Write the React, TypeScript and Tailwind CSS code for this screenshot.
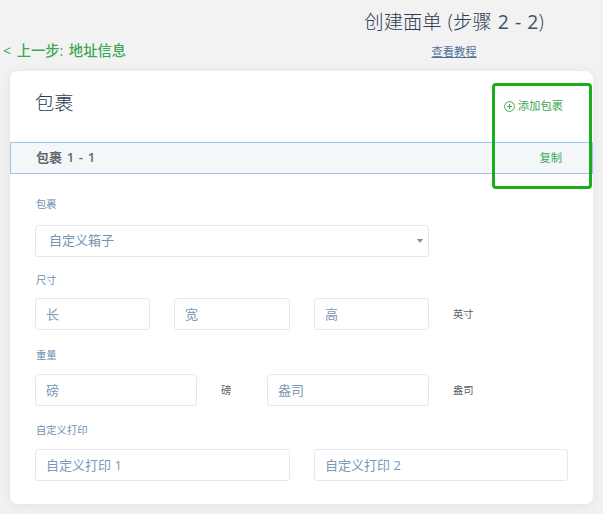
type FieldProps = {
  placeholder: string;
  className: string;
};

function Field({ placeholder, className }: FieldProps) {
  return (
    <input
      type="text"
      placeholder={placeholder}
      className={`h-8 rounded-[3px] border border-[#e6e8ef] bg-white pl-[10px] pb-px text-[13px] text-[#6f8fb3] placeholder:text-[#7c98b8] outline-none ${className}`}
    />
  );
}

function Label({ children }: { children: string }) {
  return <div className="pl-px text-[10.3px] leading-4 text-[#7090b4]">{children}</div>;
}

function Unit({ children }: { children: string }) {
  return <span className="text-[10.3px] leading-4 text-[#5c5f63]">{children}</span>;
}

function PlusCircle() {
  return (
    <svg width="11" height="11" viewBox="0 0 11 11" fill="none" stroke="currentColor">
      <circle cx="5.5" cy="5.5" r="4.9" />
      <path d="M5.5 3v5M3 5.5h5" />
    </svg>
  );
}

function Header() {
  return (
    <header className="flex h-[71px] justify-between pl-[3px] pr-[10px]">
      <a href="#" className="pt-[41px] text-[14.3px] font-medium leading-5 text-[#3ba755] [word-spacing:1.8px]">
        &lt; 上一步: 地址信息
      </a>
      <div className="flex w-[278px] flex-col items-center pt-[9px]">
        <h1 className="text-[19.3px] font-light leading-[26px] text-[#2b3d55] [word-spacing:1.2px]">
          创建面单 (步骤 <span className="font-normal text-[#40526a]">2 - 2</span>)
        </h1>
        <a href="#" className="mt-[9px] text-[11.3px] leading-4 text-[#50709a] underline">
          查看教程
        </a>
      </div>
    </header>
  );
}

export default function App() {
  return (
    <div className="h-[514px] w-[603px] overflow-hidden bg-[#f2f2f2] font-['Open_Sans','Noto_Sans_CJK_SC',sans-serif]">
      <Header />
      <main className="relative ml-[10px] h-[433px] w-[583px] rounded-lg bg-white shadow-[0_2px_12px_rgba(80,80,120,0.09)]">
        <div className="flex h-[71px] justify-between pl-[25px] pr-[30px]">
          <h2 className="pt-[18px] text-[19.3px] font-light leading-7 text-[#2b3d55]">包裹</h2>
          <button className="flex h-4 items-center gap-[3px] mt-[27px] text-[11.3px] text-[#3ba755]">
            <PlusCircle />
            添加包裹
          </button>
        </div>
        <div className="flex h-8 items-center justify-between border border-[#a5c1ed] bg-[#f3f7fa] pl-[25px] pr-[30px]">
          <span className="text-[13px] font-semibold text-[#66696d] [word-spacing:1.3px]">包裹 1 - 1</span>
          <button className="text-[11.3px] text-[#3ba755]">复制</button>
        </div>

        <form className="pl-[25px] pr-[25px] pt-[22px]">
          <Label>包裹</Label>
          <div className="mt-[13px] flex h-8 w-[394px] items-center justify-between rounded-[3px] border border-[#e6e8ef] pl-[13px] pr-[5px] text-[13px] text-[#7592b4]">
            自定义箱子
            <svg width="6" height="4" viewBox="0 0 6 4" fill="currentColor">
              <path d="M0 0h6L3 4z" />
            </svg>
          </div>

          <div className="mt-[15px]">
            <Label>尺寸</Label>
            <div className="mt-[10px] flex items-center gap-6">
              <Field placeholder="长" className="w-[115px]" />
              <Field placeholder="宽" className="w-[116px]" />
              <Field placeholder="高" className="w-[115px]" />
              <Unit>英寸</Unit>
            </div>
          </div>

          <div className="mt-[17px]">
            <Label>重量</Label>
            <div className="mt-[11px] flex items-center">
              <Field placeholder="磅" className="w-[162px]" />
              <div className="flex w-[70px] pl-6">
                <Unit>磅</Unit>
              </div>
              <Field placeholder="盎司" className="mr-6 w-[162px]" />
              <Unit>盎司</Unit>
            </div>
          </div>

          <div className="mt-[16px]">
            <Label>自定义打印</Label>
            <div className="mt-[11px] flex gap-6">
              <Field placeholder="自定义打印 1" className="w-[255px]" />
              <Field placeholder="自定义打印 2" className="w-[254px]" />
            </div>
          </div>
        </form>

        {/* highlight around the package actions */}
        <div className="pointer-events-none absolute right-px top-3 h-[106px] w-[100px] rounded border-[3px] border-[#1bad19]" />
      </main>
    </div>
  );
}
